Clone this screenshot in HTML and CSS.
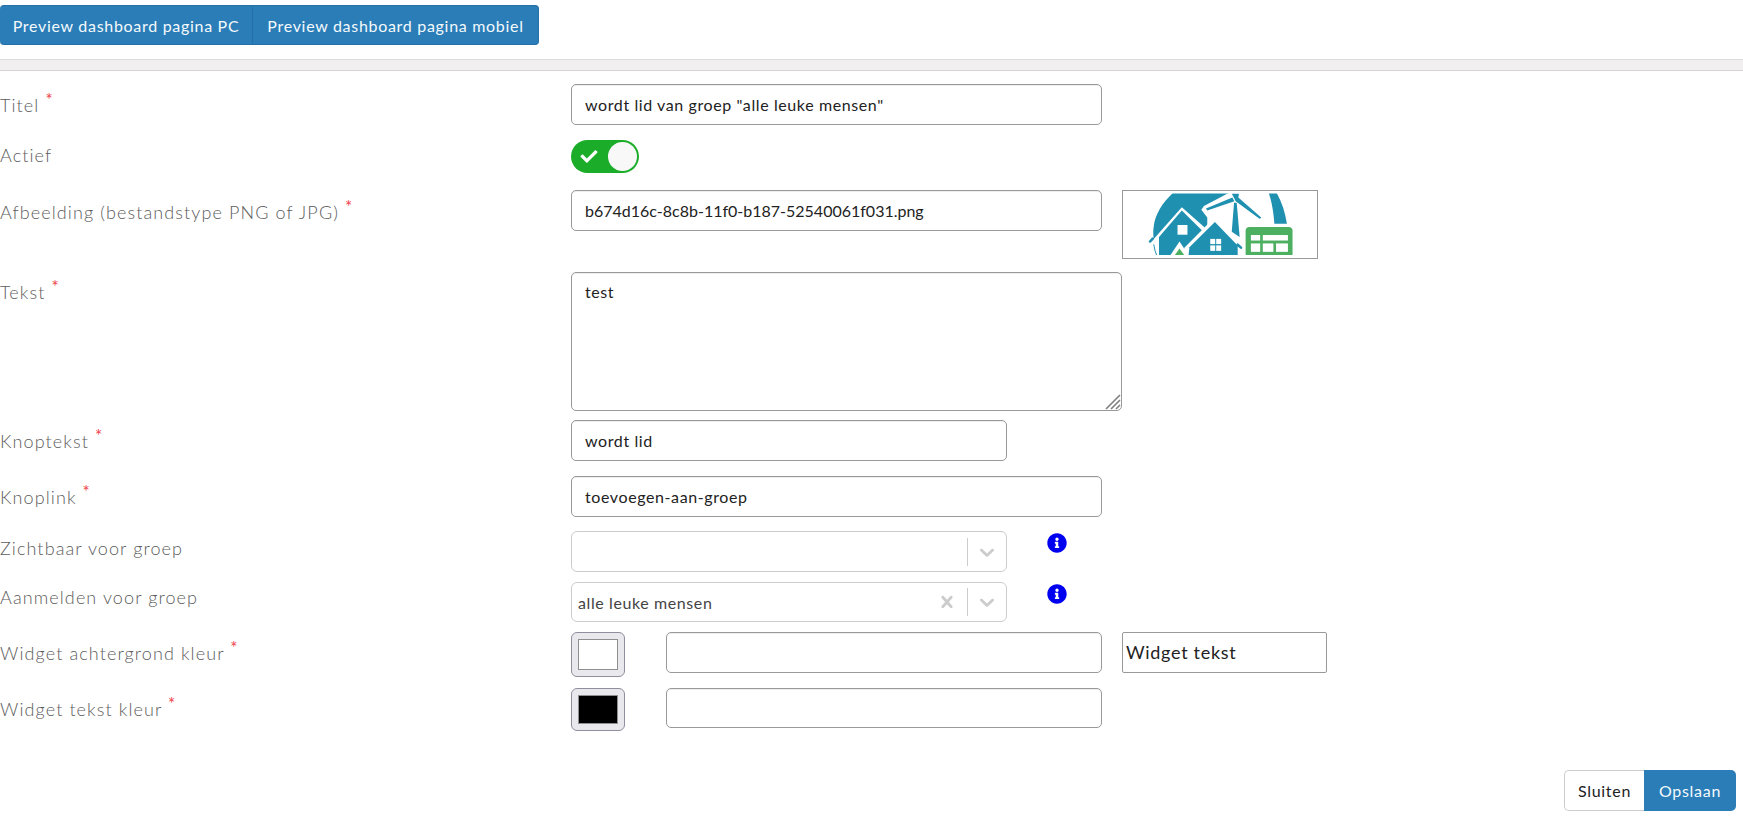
FILE: index.html
```html
<!DOCTYPE html>
<html lang="nl">
<head>
<meta charset="utf-8">
<title>Widget bewerken</title>
<link rel="stylesheet" href="styles.css">
</head>
<body>
<header class="top">
  <div class="btn-group">
    <button class="btn btn-primary btn-first" type="button">Preview dashboard pagina PC</button>
    <button class="btn btn-primary btn-last" type="button">Preview dashboard pagina mobiel</button>
  </div>
</header>
<div class="divider"></div>
<form class="form">
  <label class="label">Titel <span class="req">*</span></label>
  <div class="field"><input class="input input-wide" type="text" value="wordt lid van groep &quot;alle leuke mensen&quot;"></div>

  <label class="label label-actief">Actief</label>
  <div class="field">
    <div class="toggle">
      <svg class="toggle-check" viewBox="0 0 512 512"><path d="M173.898 439.404l-166.4-166.4c-9.997-9.997-9.997-26.206 0-36.204l36.203-36.204c9.997-9.998 26.207-9.998 36.204 0L192 312.69 432.095 72.596c9.997-9.997 26.207-9.997 36.204 0l36.203 36.204c9.997 9.997 9.997 26.206 0 36.204l-294.4 294.401c-9.998 9.997-26.207 9.997-36.204-.001z"/></svg>
      <span class="toggle-knob"></span>
    </div>
  </div>

  <label class="label label-afb">Afbeelding (bestandstype PNG of JPG) <span class="req">*</span></label>
  <div class="field field-gap">
    <input class="input input-wide input-file" type="text" value="b674d16c-8c8b-11f0-b187-52540061f031.png">
    <div class="thumb">
      <svg class="thumb-img" viewBox="67 30 587 207" preserveAspectRatio="none">
        <defs><clipPath id="crop"><rect x="70" y="38" width="581" height="190"/></clipPath></defs>
        <g clip-path="url(#crop)">
          <path class="b" d="M225 30L398 30 312 76 304 88 322 112 322 150 245 80 160 178C158 165 158 150 160 140 164 100 190 60 225 30Z"/>
          <path class="b" d="M508 36L532 36C548 65 558 98 563 131L525 131C523 98 518 66 508 36Z"/>
          <path class="b" d="M176 172L245 90 314 160 262 228 176 228Z"/>
          <path class="arc" d="M160 195Q163 215 170 232"/>
          <path class="blue-line" d="M149 186L157 177"/>
          <rect class="w" x="232" y="135" width="30" height="30"/>
          <path class="wf" d="M208 232L238 186 268 232Z"/>
          <path class="g" d="M221 232L238 208 255 232Z"/>
          <path class="wf" d="M252 206L345 110 434 206 434 240 256 240Z"/>
          <path class="b" d="M265 232L268 204 345 126 414 198 414 232Z"/>
          <path class="blue-line" d="M414 196L424 205"/>
          <g class="w"><rect x="331" y="178" width="15" height="16"/><rect x="349" y="178" width="15" height="16"/><rect x="331" y="198" width="15" height="17"/><rect x="349" y="198" width="15" height="17"/></g>
          <path class="b" d="M403 66L411 66 420 172 396 156Z"/>
          <path class="b" d="M396 38L418 38 416 50 486 113 480 116 408 62Z"/>
          <path class="b" d="M398 50L318 84 322 90 404 62Z"/>
          <rect class="g" x="438" y="141" width="142" height="100" rx="12"/>
          <g class="w"><rect x="454" y="166" width="28" height="17"/><rect x="490" y="166" width="76" height="17"/><rect x="454" y="192" width="28" height="26"/><rect x="490" y="192" width="32" height="26"/><rect x="530" y="192" width="36" height="26"/></g>
        </g>
      </svg>
    </div>
  </div>

  <label class="label label-tekst">Tekst <span class="req">*</span></label>
  <div class="field">
    <div class="textarea-wrap">
      <textarea class="input textarea">test</textarea>
      <svg class="grip" viewBox="0 0 16 16"><path d="M1 15L15 1M6 15L15 6M11 15L15 11"/></svg>
    </div>
  </div>

  <label class="label">Knoptekst <span class="req">*</span></label>
  <div class="field"><input class="input input-mid" type="text" value="wordt lid"></div>

  <label class="label label-link">Knoplink <span class="req">*</span></label>
  <div class="field"><input class="input input-wide" type="text" value="toevoegen-aan-groep"></div>

  <label class="label label-zicht">Zichtbaar voor groep</label>
  <div class="field field-info">
    <div class="select">
      <span class="select-value"></span>
      <span class="select-sep"></span>
      <svg class="chevron" viewBox="0 0 20 20"><path d="M4.516 7.548c0.436-0.446 1.043-0.481 1.576 0l3.908 3.747 3.908-3.747c0.533-0.481 1.141-0.446 1.574 0 0.436 0.445 0.408 1.197 0 1.615-0.406 0.418-4.695 4.502-4.695 4.502-0.217 0.223-0.502 0.335-0.787 0.335s-0.57-0.112-0.789-0.335c0 0-4.287-4.084-4.695-4.502s-0.436-1.17 0-1.615z"/></svg>
    </div>
    <svg class="info" viewBox="0 0 512 512"><path d="M256 8C119.043 8 8 119.083 8 256c0 136.997 111.043 248 248 248s248-111.003 248-248C504 119.083 392.957 8 256 8zm0 110c23.196 0 42 18.804 42 42s-18.804 42-42 42-42-18.804-42-42 18.804-42 42-42zm56 254c0 6.627-5.373 12-12 12h-88c-6.627 0-12-5.373-12-12v-24c0-6.627 5.373-12 12-12h12v-64h-12c-6.627 0-12-5.373-12-12v-24c0-6.627 5.373-12 12-12h64c6.627 0 12 5.373 12 12v100h12c6.627 0 12 5.373 12 12v24z"/></svg>
  </div>

  <label class="label label-aanm">Aanmelden voor groep</label>
  <div class="field field-info">
    <div class="select select-short">
      <span class="select-value">alle leuke mensen</span>
      <svg class="cross" viewBox="0 0 20 20"><path d="M14.348 14.849c-0.469 0.469-1.229 0.469-1.697 0l-2.651-3.030-2.651 3.029c-0.469 0.469-1.229 0.469-1.697 0-0.469-0.469-0.469-1.229 0-1.697l2.758-3.15-2.759-3.152c-0.469-0.469-0.469-1.228 0-1.697s1.228-0.469 1.697 0l2.652 3.031 2.651-3.031c0.469-0.469 1.228-0.469 1.697 0s0.469 1.229 0 1.697l-2.758 3.152 2.758 3.15c0.469 0.469 0.469 1.229 0 1.698z"/></svg>
      <span class="select-sep"></span>
      <svg class="chevron" viewBox="0 0 20 20"><path d="M4.516 7.548c0.436-0.446 1.043-0.481 1.576 0l3.908 3.747 3.908-3.747c0.533-0.481 1.141-0.446 1.574 0 0.436 0.445 0.408 1.197 0 1.615-0.406 0.418-4.695 4.502-4.695 4.502-0.217 0.223-0.502 0.335-0.787 0.335s-0.57-0.112-0.789-0.335c0 0-4.287-4.084-4.695-4.502s-0.436-1.17 0-1.615z"/></svg>
    </div>
    <svg class="info" viewBox="0 0 512 512"><path d="M256 8C119.043 8 8 119.083 8 256c0 136.997 111.043 248 248 248s248-111.003 248-248C504 119.083 392.957 8 256 8zm0 110c23.196 0 42 18.804 42 42s-18.804 42-42 42-42-18.804-42-42 18.804-42 42-42zm56 254c0 6.627-5.373 12-12 12h-88c-6.627 0-12-5.373-12-12v-24c0-6.627 5.373-12 12-12h12v-64h-12c-6.627 0-12-5.373-12-12v-24c0-6.627 5.373-12 12-12h64c6.627 0 12 5.373 12 12v100h12c6.627 0 12 5.373 12 12v24z"/></svg>
  </div>

  <label class="label">Widget achtergrond kleur <span class="req">*</span></label>
  <div class="field field-color">
    <input class="color" type="color" value="#ffffff">
    <input class="input input-color" type="text">
    <div class="preview">Widget tekst</div>
  </div>

  <label class="label label-kleur">Widget tekst kleur <span class="req">*</span></label>
  <div class="field field-color">
    <input class="color color-low" type="color" value="#000000">
    <input class="input input-color" type="text">
  </div>
</form>
<footer class="footer">
  <div class="btn-group">
    <button class="btn btn-default" type="button">Sluiten</button>
    <button class="btn btn-primary btn-save" type="button">Opslaan</button>
  </div>
</footer>
</body>
</html>
```

FILE: styles.css
```css
* { box-sizing: border-box; }
html, body { margin: 0; padding: 0; }
body {
  background: #fff;
  font-family: Lato, "Liberation Sans", sans-serif;
  font-size: 16px;
  color: #000;
  height: 816px;
  overflow: hidden;
}
.top { padding: 5px 0 14px; height: 59px; }
.btn-group { display: inline-flex; }
.btn {
  height: 40px;
  font: 400 16px Lato, sans-serif;
  letter-spacing: 0.7px;
  border: 1px solid #2470a8;
  padding: 0;
  cursor: pointer;
}
.btn-primary { background: #2a7db7; color: #f4f9fc; }
.btn-first { width: 253px; border-radius: 4px 0 0 4px; border-left: 0; }
.btn-last { width: 286px; border-left: 0; border-radius: 0 4px 4px 0; }
.divider {
  height: 12px;
  background: #f1efef;
  border-top: 1px solid #dcdcdc;
  border-bottom: 1px solid #d8d4d4;
}
.form {
  display: grid;
  grid-template-columns: 571px 1fr;
  grid-template-rows: 56px 50px 82px 148px 56px 55px 51px 50px 56px 43px;
  margin-top: 13px;
}
.label {
  display: block;
  padding-top: 9px;
  font-size: 18px;
  font-weight: 300;
  line-height: 24px;
  letter-spacing: 1.1px;
  color: #5c5c5c;
  white-space: nowrap;
}
.label-actief { padding-top: 3px; }
.label-afb { padding-top: 10px; }
.label-tekst { padding-top: 8px; }
.label-link { padding-top: 9px; }
.label-zicht { padding-top: 5px; }
.label-aanm { padding-top: 3px; }
.label-kleur { padding-top: 9px; }
.req {
  display: inline-block;
  position: relative;
  top: -6px;
  margin-left: 0;
  color: #f0414b;
  font-size: 17px;
  font-weight: 400;
  line-height: 14px;
  letter-spacing: 0;
}
.field { display: flex; align-items: flex-start; }
.field-gap { gap: 20px; }
.field-info { gap: 40px; }
.field-color { gap: 41px; }
.input {
  display: block;
  height: 41px;
  border: 1px solid #999;
  border-radius: 5px;
  background: #fff;
  padding: 0 13px;
  font: 400 16px Lato, sans-serif;
  letter-spacing: 0.6px;
  color: #222;
  box-shadow: inset 0 1px 1px rgba(0,0,0,.07);
  outline: none;
}
.input-wide { width: 531px; }
.input-mid { width: 436px; }
.input-color { width: 436px; }
.input-file { letter-spacing: 0; }
.field-color:last-child .input-color { height: 40px; }
.textarea-wrap { position: relative; width: 551px; height: 139px; }
.textarea {
  width: 551px;
  height: 139px;
  padding: 9px 13px;
  resize: none;
  line-height: 20px;
}
.grip {
  position: absolute;
  right: 1px;
  bottom: 1px;
  width: 16px;
  height: 16px;
  fill: none;
  stroke: #808080;
  stroke-width: 1.6;
  pointer-events: none;
}
.toggle {
  position: relative;
  width: 68px;
  height: 33px;
  border-radius: 17px;
  background: #1bad29;
}
.toggle-check {
  position: absolute;
  left: 9px;
  top: 8px;
  width: 18px;
  height: 17px;
  fill: #fff;
}
.toggle-knob {
  position: absolute;
  right: 2px;
  top: 2px;
  width: 29px;
  height: 29px;
  border-radius: 50%;
  background: #f8f8f8;
}
.thumb {
  width: 196px;
  height: 69px;
  border: 1px solid #999;
  background: #fff;
}
.thumb-img { display: block; width: 100%; height: 100%; }
.b { fill: #2090b0; }
.g { fill: #4cb060; }
.w, .wf { fill: #fff; }
.arc { fill: none; stroke: #2090b0; stroke-width: 3; }
.blue-line { fill: none; stroke: #2090b0; stroke-width: 8; stroke-linecap: round; }
.select {
  position: relative;
  display: flex;
  align-items: center;
  width: 436px;
  height: 41px;
  border: 1px solid #ccc;
  border-radius: 6px;
  background: #fff;
  padding-left: 6px;
}
.select-short { height: 40px; }
.select-value {
  flex: 1;
  font-size: 16px;
  letter-spacing: 0.6px;
  color: #444;
}
.select-sep { width: 1px; height: 28px; background: #ccc; }
.chevron { width: 24px; height: 24px; fill: #ccc; margin: 0 7px; }
.cross { width: 24px; height: 24px; fill: #ccc; margin-right: 8px; }
.info { width: 20px; height: 20px; margin-top: 2px; fill: #0000f0; }
.color {
  -webkit-appearance: none;
  appearance: none;
  width: 54px;
  height: 45px;
  padding: 0;
  border: 1px solid #8f8f9d;
  border-radius: 6px;
  background: #e9e9ed;
  cursor: pointer;
}
.color::-webkit-color-swatch-wrapper { padding: 6px; }
.color::-webkit-color-swatch { border: 1px solid #8f8f8f; border-radius: 0; }
.color-low { height: 43px; }
.preview {
  width: 205px;
  height: 41px;
  margin-left: -21px;
  border: 1px solid #999;
  border-radius: 2px;
  padding-left: 3px;
  font-size: 18px;
  line-height: 39px;
  letter-spacing: 0.7px;
  color: #222;
}
.footer {
  display: flex;
  justify-content: flex-end;
  padding-right: 7px;
  margin-top: 39px;
}
.btn-default {
  width: 80px;
  height: 41px;
  background: #fff;
  border: 1px solid #ccc;
  border-right: 0;
  border-radius: 5px 0 0 5px;
  color: #222;
}
.btn-save {
  width: 92px;
  height: 41px;
  border: 0;
  border-radius: 0 5px 5px 0;
}
```
